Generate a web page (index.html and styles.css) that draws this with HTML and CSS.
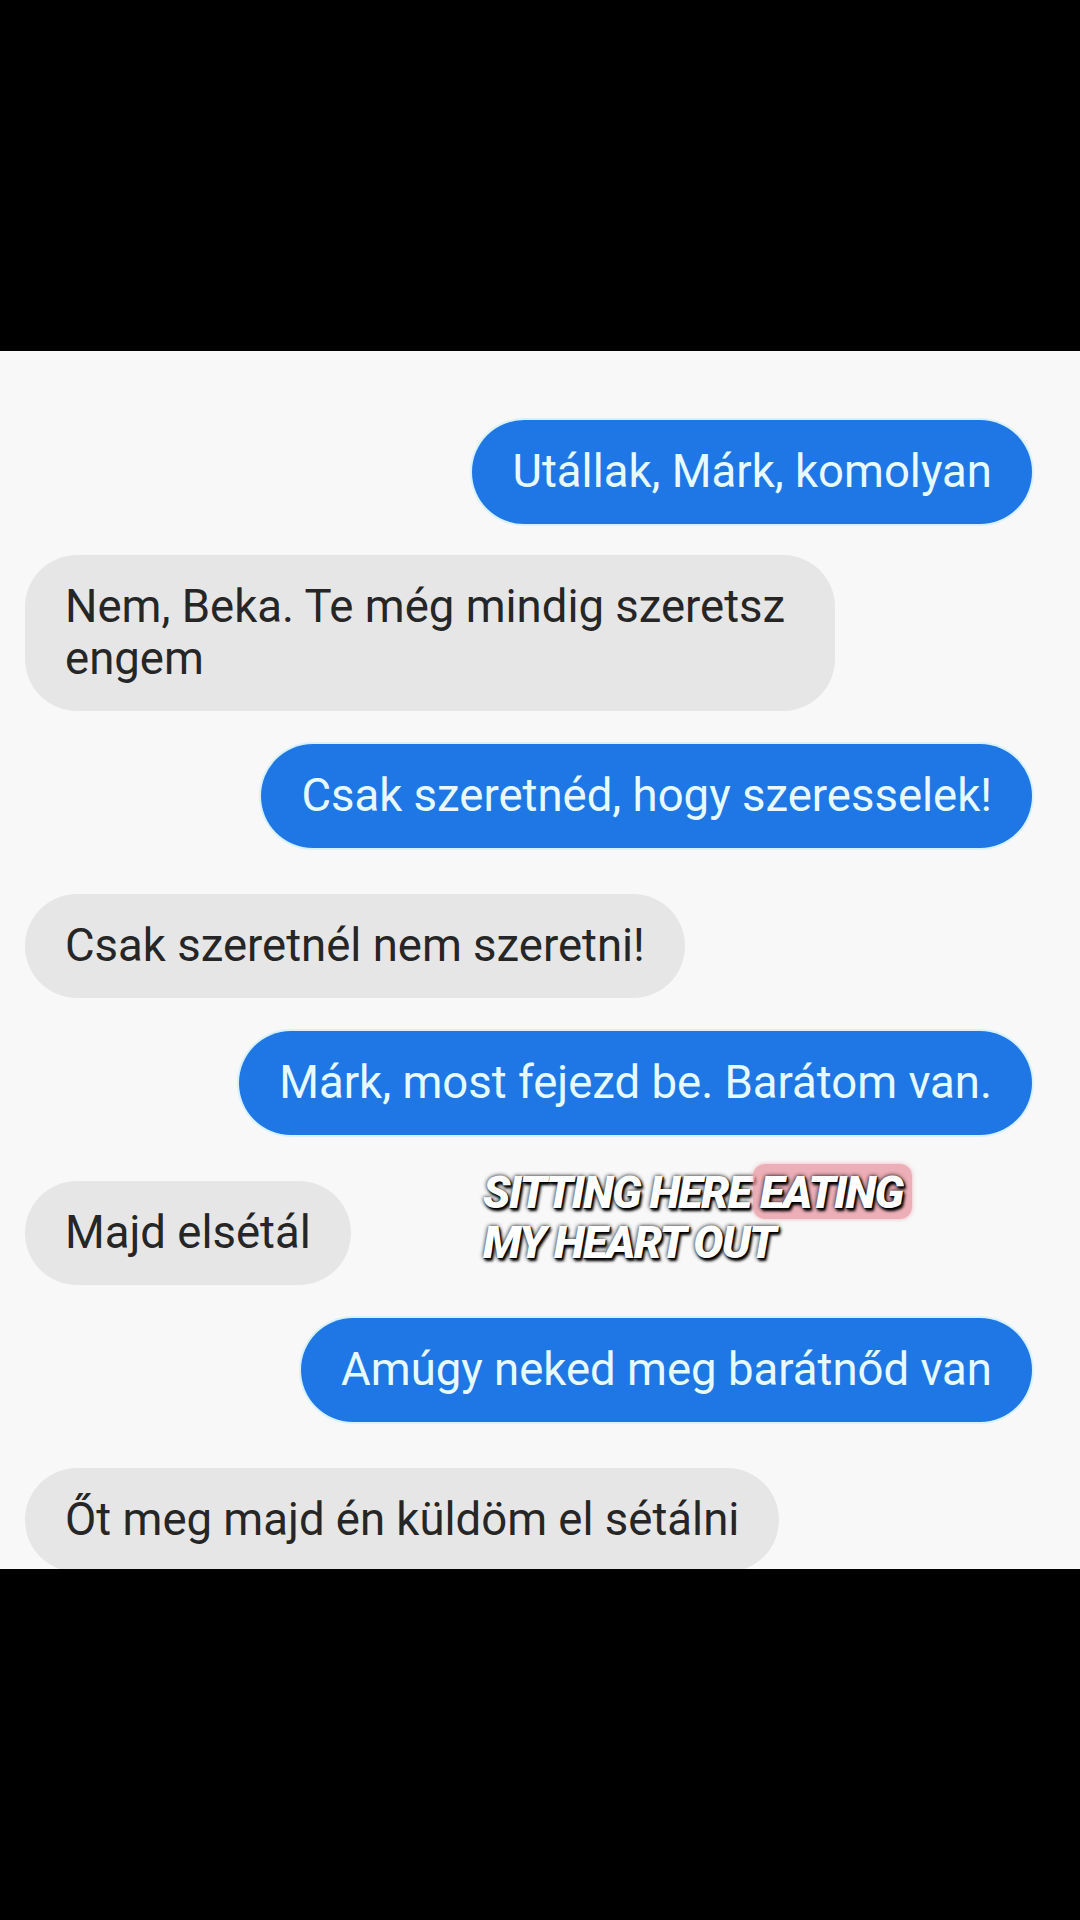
FILE: index.html
```html
<!DOCTYPE html>
<html lang="hu">
<head>
<meta charset="utf-8">
<title>Chat</title>
<link rel="stylesheet" href="styles.css">
</head>
<body>
<div class="screen">
  <div class="bar bar-top"></div>
  <main class="chat">
    <div class="msg out">Utállak, Márk, komolyan</div>
    <div class="msg in">Nem, Beka. Te még mindig szeretsz engem</div>
    <div class="msg out">Csak szeretnéd, hogy szeresselek!</div>
    <div class="msg in spaced">Csak szeretnél nem szeretni!</div>
    <div class="msg out">Márk, most fejezd be. Barátom van.</div>
    <div class="msg in spaced">Majd elsétál</div>
    <div class="msg out">Amúgy neked meg barátnőd van</div>
    <div class="msg in spaced">Őt meg majd én küldöm el sétálni</div>
    <div class="caption">
      <div class="cap-line">SITTING HERE <span class="hl">EATING</span></div>
      <div class="cap-line">MY HEART OUT</div>
    </div>
  </main>
  <div class="bar bar-bottom"></div>
</div>
</body>
</html>
```
FILE: styles.css
```css
html, body {
  margin: 0;
  padding: 0;
  background: #000;
}

.screen {
  width: 1080px;
  height: 1920px;
  display: flex;
  flex-direction: column;
  overflow: hidden;
}

.bar {
  background: #000;
}

.bar-top {
  height: 351px;
  flex: none;
}

.bar-bottom {
  flex: 1;
}

.chat {
  position: relative;
  height: 1218px;
  flex: none;
  box-sizing: border-box;
  background: #f8f8f8;
  padding: 69px 48px 0 25px;
  display: flex;
  flex-direction: column;
  align-items: flex-start;
  gap: 31px;
  overflow: hidden;
  font-family: Roboto, "Noto Sans", sans-serif;
}

.msg {
  box-sizing: border-box;
  max-width: 810px;
  padding: 26px 40px;
  font-size: 45.5px;
  line-height: 52px;
  border-radius: 52px;
  flex: none;
}

.msg.out {
  align-self: flex-end;
  background: #1f77e5;
  color: #e7fbff;
  box-shadow: 0 0 0 2px #d8f1ff;
}

.msg.in {
  align-self: flex-start;
  background: #e6e6e6;
  color: #262626;
}

.msg.in + .msg.out {
  margin-top: 2px;
}

.msg.spaced {
  margin-top: 15px;
}

.caption {
  position: absolute;
  left: 483px;
  top: 817px;
  font-family: Roboto, "Noto Sans", sans-serif;
  font-weight: 900;
  font-style: italic;
  font-size: 45px;
  line-height: 50px;
  letter-spacing: -1.7px;
  color: #fff;
  text-shadow: 2px 3px 3px #000, 0 0 4px #000, 1px 1px 1px #000;
}

.cap-line {
  white-space: nowrap;
}

.hl {
  background: rgba(232, 150, 162, 0.75);
  border-radius: 12px;
  padding: 2px 10px 0 7px;
  margin-left: -7px;
  box-shadow: 0 0 4px rgba(232, 150, 162, 0.7);
}
```
